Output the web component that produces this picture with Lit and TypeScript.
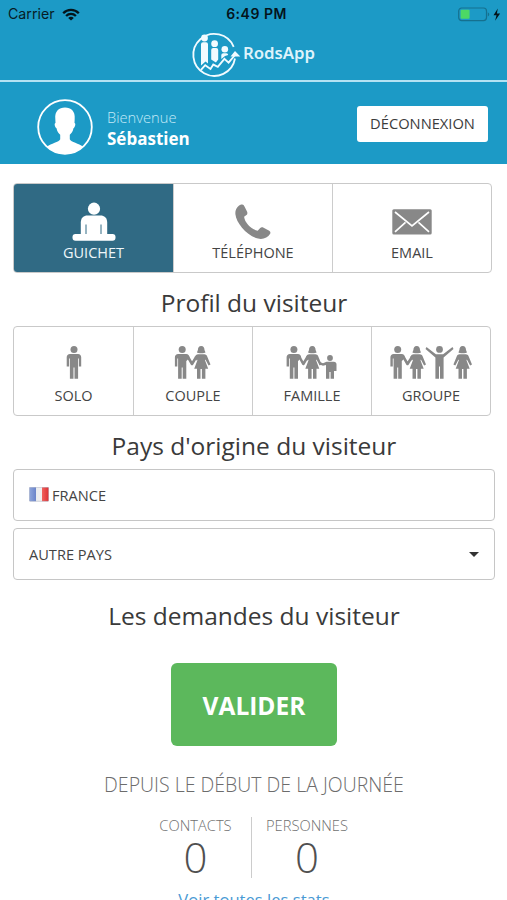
import { LitElement, html, svg, css } from "lit";
import { customElement, property } from "lit/decorators.js";

const man = (x: number, joined = false) => svg`<g transform="translate(${x} 0)">
  <circle cx="0" cy="3.5" r="3.5"/>
  <path d="M-4 8h8c2 0 3.2 1.4 3.2 3.2${joined ? "L7.2 12L4.2 15" : "V20.5h-2.3V12.5"}H4.1V32.8H.5V21.5H-.5V32.8H-4.1V12.5h-.8v8h-2.4V11.2C-7.3 9.4-6 8-4 8z"/></g>`;

const woman = (x: number, joined = false) => svg`<g transform="translate(${x} 0)">
  <path d="M0 0c2.4 0 3.3 2 3.3 4l1 2.5C3 7.4 1.5 7.2 0 7.2S-3 7.4-4.3 6.5l1-2.5C-3.3 2-2.4 0 0 0z"/>
  <path d="M-3.2 8.2h6.4c1.3 0 2.1.7 2.6 1.9L9.3 18.4 7.4 19.5 4.2 13.5 3.8 14.3 7 22.8H4.2V32.8H.7V23H-.7V32.8h-3.5v-10H-7l3.2-8.5-.4-.8${joined ? "l-.8 1.2L-6.5 11" : "L-7.4 19.5l-1.9-1.1"}L-5.8 10.1c.5-1.2 1.3-1.9 2.6-1.9z"/></g>`;

const link = (x1: number, y1: number, xm: number, ym: number, x2: number, y2: number) =>
  svg`<path d="M${x1} ${y1}L${xm} ${ym}L${x2} ${y2}" fill="none" stroke="currentColor" stroke-width="2.6" stroke-linejoin="round"/>`;

const child = (x: number) => svg`<g transform="translate(${x} 0)">
  <circle cx="0" cy="12" r="2.9"/>
  <path d="M-11 18.2l1-2.3 3 1.300L-3.500 15.800H3.800c1.700 0 2.700 1 2.700 2.500V25H4V32.800H.6V26H-.6v6.800H-4V19L-7 19.700z"/></g>`;

const cheering = (x: number) => svg`<g transform="translate(${x} 0)">
  <circle cx="0" cy="3.4" r="3.4"/>
  <path d="M-13 1.1L-3.6 8.2H3.6L13 1.1 14 2.9 4.1 11.5V32.8H.5V20.5H-.5V32.8H-4.1V11.5L-14 2.9z"/></g>`;

const icons: Record<string, unknown> = {
  guichet: html`<svg width="44" height="40" viewBox="0 0 44 40" fill="currentColor">
    <circle cx="22" cy="6.7" r="6.1"/>
    <path d="M8.800 33V20.500c0-4.500 3-7 6.700-7h13c3.700 0 6.700 2.500 6.700 7V33z"/>
    <rect x=".5" y="32" width="43" height="6.8" rx="3"/>
    <path d="M14 22.500v9.500M29 22.500v9.500" stroke="#306a84" stroke-width="1"/></svg>`,
  telephone: html`<svg width="36" height="36" viewBox="0 0 36 36" fill="currentColor">
    <path d="M6.200.600C8 0 8.700.800 9.500 2.400L12 7.600c.7 1.500.5 2.700-.9 3.700l-2 1.500c.7 6 7 12.500 13.600 14l2.300-2.600c1-1.100 2.200-1.200 3.600-.5l5.200 2.900c1.600.9 2 2 1.200 3.400-2.100 3.800-7 5.700-12 4.600C11.500 31.700 1.300 19 .4 10.300 0 5.700 2.500 2 6.200.6z"/></svg>`,
  email: html`<svg width="40" height="26" viewBox="0 0 40 26">
    <rect x=".3" y=".3" width="39.400" height="25.200" rx="1.500" fill="currentColor"/>
    <path d="M3 3l17 13.800L37 3M3 22.800l10.500-9.500M37 22.800l-10.500-9.500" fill="none" stroke="#fff" stroke-width="1.700"/></svg>`,
  solo: html`<svg width="16" height="34" viewBox="-8 0 16 34" fill="currentColor">${man(0)}</svg>`,
  couple: html`<svg width="38" height="34" viewBox="0 0 38 34" fill="currentColor">
    ${man(8.200, true)}${woman(27.200, true)}${link(14, 11, 18, 18, 22.200, 11)}</svg>`,
  famille: html`<svg width="52" height="34" viewBox="0 0 52 34" fill="currentColor">
    ${man(7.900, true)}${woman(26.300, true)}${link(13.500, 11, 17.300, 18, 21.500, 11)}${child(44)}</svg>`,
  groupe: html`<svg width="84" height="34" viewBox="0 0 84 34" fill="currentColor">
    ${man(8.700, true)}${woman(27.700, true)}${link(14.500, 11, 18.500, 18, 23, 11)}${cheering(50.500)}${woman(73.700)}</svg>`,
};

interface Choice { icon: string; label: string; active?: boolean; }

@customElement("choice-bar")
export class ChoiceBar extends LitElement {
  @property({ attribute: false }) choices: Choice[] = [];
  static styles = css`
    :host { display: flex; box-sizing: border-box; height: 90px; border: 1px solid #c9c9c9; border-radius: 4px; overflow: hidden; }
    .choice { flex: 1 1 0; min-width: 0; display: flex; flex-direction: column; align-items: center; justify-content: flex-end; color: #888; }
    .choice:first-child { flex-basis: 1px; }
    .choice + .choice { border-left: 1px solid #ccc; }
    .choice.active { background: #306a84; color: #fff; }
    .art { flex: 1; display: flex; align-items: center; padding-top: var(--art-top, 16px); }
    svg { display: block; }
    .label { font-size: 14.500px; line-height: 20px; padding-bottom: 9px; color: #444; }
    .active .label { color: #eef6fa; }
  `;
  render() {
    return this.choices.map(c => html`<div class="choice ${c.active ? "active" : ""}">
      <div class="art">${icons[c.icon]}</div><div class="label">${c.label}</div></div>`);
  }
}

@customElement("app-root")
export class AppRoot extends LitElement {
  static styles = css`
    :host { display: block; height: 900px; overflow: hidden; background: #fff; font-family: "Open Sans", "Noto Sans", sans-serif; color: #333; }
    * { box-sizing: border-box; }
    svg { display: block; }
    .top { background: #1c9ac6; height: 164px; }
    .status { display: grid; grid-template-columns: 1fr auto 1fr; height: 28px; padding: 0 5px 0 8px; align-items: center; font: 14.200px/28px Inter, sans-serif; color: #071c25; }
    .carrier { display: flex; align-items: center; gap: 7px; }
    .time { font-weight: 600; font-size: 14px; letter-spacing: .5px; padding-left: 3px; color: #04141b; }
    .power { justify-self: end; }
    .brand { height: 54px; border-bottom: 2px solid #b4e2f3; display: flex; justify-content: center; padding: 2px 1px 0 0; }
    .name { font: 600 16.800px/24px "Noto Sans", sans-serif; color: #def3fb; margin: 11px 0 0 2px; }
    .user { display: flex; align-items: center; height: 82px; padding: 8px 19px 0 37px; }
    .hello { margin-left: 14px; flex: 1; font-size: 15px; line-height: 22px; padding-top: 1px; }
    .welcome { font-weight: 300; font-size: 14.700px; color: #c3e9f7; }
    .who { font-weight: 700; font-size: 17px; color: #fff; }
    .logout { width: 131px; height: 36px; margin-bottom: 6px; border-radius: 3px; background: #fff; font-size: 14.700px; line-height: 35px; text-align: center; color: #3c3c3c; }
    .body { padding: 19px 12px 0 13px; }
    .channels { width: 479px; }
    .profiles { width: 478px; --art-top: 13px; }
    h2 { margin: 0; font-weight: 400; font-size: 24.500px; line-height: 32px; text-align: center; color: #3a3a3a; white-space: nowrap; }
    .h-profile { padding: 14px 0 7px; }
    .h-country { padding: 14px 0 7px; }
    .h-asks { padding: 20px 0 31px; }
    .field { display: flex; align-items: center; height: 52px; border: 1px solid #c6c6c6; border-radius: 4px; padding: 0 15px; font-size: 14.600px; color: #444; }
    .field + .field { margin-top: 7px; }
    .flag { margin: 0 3px 2px 0; }
    .caret { margin-left: auto; border: 5px solid transparent; border-top-color: #333; border-bottom: 0; }
    .submit { width: 166px; height: 83px; margin: 0 auto; border-radius: 6px; background: #5cb85c; color: #fff; font-size: 24.500px; font-weight: 700; line-height: 85px; text-align: center; }
    .since { text-align: center; font-size: 19.500px; font-weight: 300; line-height: 28px; padding-top: 25px; color: #6c6c6c; white-space: nowrap; }
    .stats { display: flex; justify-content: center; padding: 18px 6px 0 0; }
    .stat { width: 111px; height: 61px; text-align: center; font-weight: 300; }
    .stat + .stat { border-left: 1px solid #ccc; }
    .caption { font-size: 14.700px; line-height: 16px; color: #707070; }
    .count { font-size: 42px; line-height: 46px; color: #505050; padding-top: 1px; }
    .more { text-align: center; font-size: 16.600px; line-height: 24px; padding: 10px 0 0; color: #4a9ad4; }
  `;
  render() {
    return html`
      <div class="top">
        <div class="status">
          <div class="carrier"><span>Carrier</span>
            <svg width="18" height="13" viewBox="0 0 18 13" fill="none" stroke="#04141b" stroke-width="2.300">
              <path d="M1.200 5.200c4.400-4.500 11.200-4.500 15.600 0M4.100 8c2.800-2.800 7-2.800 9.800 0"/>
              <path d="M9 12.500L6.200 9.900c1.600-1.400 4-1.400 5.600 0z" fill="#04141b" stroke="none"/></svg></div>
          <div class="time">6:49 PM</div>
          <svg class="power" width="44" height="15" viewBox="0 0 44 15">
            <rect x=".7" y="1" width="27.800" height="12.600" rx="3" fill="none" stroke="#15708f" stroke-width="1.200"/>
            <rect x="2.600" y="2.800" width="9" height="9" rx="1" fill="#4cd964"/>
            <path d="M29.800 5.200c2 .8 2 3.400 0 4.200z" fill="#15708f"/>
            <path d="M39.800 1.500L35.500 8.200h3l-1.400 5.600 5-7.200h-3.200z" fill="#04141b"/></svg>
        </div>
        <div class="brand">
          <svg width="50" height="50" viewBox="191 30 50 50">
            <path d="M233.700 46.800A21 21 0 1 0 235 58.500" fill="none" stroke="#f2fbff" stroke-width="1.800"/>
            <g fill="#f2fbff"><circle cx="204.500" cy="38" r="3.400"/><circle cx="214.600" cy="43.700" r="3.400"/><circle cx="224.800" cy="49.200" r="3.300"/>
            <path d="M201 44.200q0-2 2-2h3q2 0 2 2V63.500l-2.500-2-4.500 4zM211.200 50q0-2 2-2h3q2 0 2 2V59.500l-2.300 3-4.700-3zM221.300 55q0-1.800 2-1.800h3q1.900 0 1.900 1.800L225 56l-3.700 3zM230.500 56.500l4.500-5.500 5.300 5.500z"/></g>
            <path d="M201 69.800l4.200-4.600 5.300 3.800 2.800-4.400 4.500 2.200 6.600-8 4.200 3.900L235 55" fill="none" stroke="#f2fbff" stroke-width="1.900"/>
          </svg>
          <div class="name">RodsApp</div>
        </div>
        <div class="user">
          <svg width="56" height="56" viewBox="0 0 56 56">
            <circle cx="28" cy="28" r="26.800" fill="none" stroke="#fff" stroke-width="1.800"/>
            <path d="M28 8.500c6 0 10.400 3.700 9.700 11.300l-.2 4.200c1.500.2.800 4-1 5.200-.7 3.200-2 5-3.700 6.600v4.500c1 3 9.500 4.200 13 7.200C41.500 52.500 35.500 55 28 55s-13.500-2.500-17.800-7.500c3.500-3 12-4.200 13-7.200v-4.500c-1.700-1.600-3-3.400-3.700-6.600-1.800-1.200-2.500-5-1-5.200l-.2-4.200C17.600 12.200 22 8.500 28 8.500z" fill="#fff"/></svg>
          <div class="hello"><div class="welcome">Bienvenue</div><div class="who">Sébastien</div></div>
          <div class="logout">DÉCONNEXION</div>
        </div>
      </div>
      <div class="body">
        <choice-bar class="channels" .choices=${[{ icon: "guichet", label: "GUICHET", active: true }, { icon: "telephone", label: "TÉLÉPHONE" }, { icon: "email", label: "EMAIL" }]}></choice-bar>
        <h2 class="h-profile">Profil du visiteur</h2>
        <choice-bar class="profiles" .choices=${[{ icon: "solo", label: "SOLO" }, { icon: "couple", label: "COUPLE" }, { icon: "famille", label: "FAMILLE" }, { icon: "groupe", label: "GROUPE" }]}></choice-bar>
        <h2 class="h-country">Pays d'origine du visiteur</h2>
        <div class="field">
          <svg class="flag" width="20" height="15" viewBox="0 0 20 15">
            <defs><linearGradient id="shade"><stop offset="0" stop-color="#8fa6dc"/><stop offset=".32" stop-color="#6d86cb"/><stop offset=".33" stop-color="#e8ebef"/><stop offset=".66" stop-color="#f2efef"/><stop offset=".67" stop-color="#f0605c"/><stop offset="1" stop-color="#dc3034"/></linearGradient></defs>
            <rect x=".3" y=".3" width="19.400" height="14" rx=".8" fill="url(#shade)" stroke="#a5a9bb" stroke-width=".5"/></svg>
          <span>FRANCE</span></div>
        <div class="field"><span>AUTRE PAYS</span><i class="caret"></i></div>
        <h2 class="h-asks">Les demandes du visiteur</h2>
        <div class="submit">VALIDER</div>
        <div class="since">DEPUIS LE DÉBUT DE LA JOURNÉE</div>
        <div class="stats">
          <div class="stat"><div class="caption">CONTACTS</div><div class="count">0</div></div>
          <div class="stat"><div class="caption">PERSONNES</div><div class="count">0</div></div>
        </div>
        <div class="more">Voir toutes les stats</div>
      </div>`;
  }
}
